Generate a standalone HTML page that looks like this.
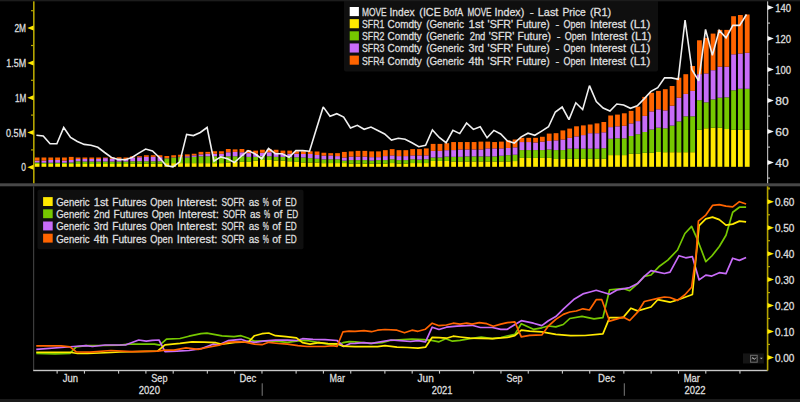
<!DOCTYPE html><html><head><meta charset="utf-8"><style>html,body{margin:0;padding:0;background:#000;width:800px;height:402px;overflow:hidden}</style></head><body><svg width="800" height="402" viewBox="0 0 800 402" style="display:block">
<rect width="800" height="402" fill="#000"/>
<rect x="0" y="0" width="800" height="1.2" fill="#1c1c1c"/>
<rect x="0" y="399" width="800" height="3" fill="#1a1a1a"/>
<rect x="0" y="183.3" width="800" height="3" fill="#484848"/>
<rect x="34.70" y="164.00" width="4.8" height="2.80" fill="#ffe900"/>
<rect x="34.70" y="162.50" width="4.8" height="1.50" fill="#76c800"/>
<rect x="34.70" y="160.60" width="4.8" height="1.90" fill="#c86cf8"/>
<rect x="34.70" y="157.50" width="4.8" height="3.10" fill="#ff6400"/>
<rect x="41.53" y="164.00" width="4.8" height="2.80" fill="#ffe900"/>
<rect x="41.53" y="162.75" width="4.8" height="1.25" fill="#76c800"/>
<rect x="41.53" y="160.60" width="4.8" height="2.15" fill="#c86cf8"/>
<rect x="41.53" y="157.50" width="4.8" height="3.10" fill="#ff6400"/>
<rect x="48.36" y="164.00" width="4.8" height="2.80" fill="#ffe900"/>
<rect x="48.36" y="162.75" width="4.8" height="1.25" fill="#76c800"/>
<rect x="48.36" y="160.00" width="4.8" height="2.75" fill="#c86cf8"/>
<rect x="48.36" y="157.50" width="4.8" height="2.50" fill="#ff6400"/>
<rect x="55.18" y="164.00" width="4.8" height="2.80" fill="#ffe900"/>
<rect x="55.18" y="162.75" width="4.8" height="1.25" fill="#76c800"/>
<rect x="55.18" y="160.00" width="4.8" height="2.75" fill="#c86cf8"/>
<rect x="55.18" y="157.50" width="4.8" height="2.50" fill="#ff6400"/>
<rect x="62.01" y="164.00" width="4.8" height="2.80" fill="#ffe900"/>
<rect x="62.01" y="162.75" width="4.8" height="1.25" fill="#76c800"/>
<rect x="62.01" y="160.60" width="4.8" height="2.15" fill="#c86cf8"/>
<rect x="62.01" y="157.50" width="4.8" height="3.10" fill="#ff6400"/>
<rect x="68.84" y="164.00" width="4.8" height="2.80" fill="#ffe900"/>
<rect x="68.84" y="162.50" width="4.8" height="1.50" fill="#76c800"/>
<rect x="68.84" y="160.00" width="4.8" height="2.50" fill="#c86cf8"/>
<rect x="68.84" y="156.90" width="4.8" height="3.10" fill="#ff6400"/>
<rect x="75.67" y="164.00" width="4.8" height="2.80" fill="#ffe900"/>
<rect x="75.67" y="161.25" width="4.8" height="2.75" fill="#76c800"/>
<rect x="75.67" y="159.00" width="4.8" height="2.25" fill="#c86cf8"/>
<rect x="75.67" y="157.50" width="4.8" height="1.50" fill="#ff6400"/>
<rect x="82.50" y="164.00" width="4.8" height="2.80" fill="#ffe900"/>
<rect x="82.50" y="161.50" width="4.8" height="2.50" fill="#76c800"/>
<rect x="82.50" y="159.00" width="4.8" height="2.50" fill="#c86cf8"/>
<rect x="82.50" y="157.50" width="4.8" height="1.50" fill="#ff6400"/>
<rect x="89.32" y="164.00" width="4.8" height="2.80" fill="#ffe900"/>
<rect x="89.32" y="161.50" width="4.8" height="2.50" fill="#76c800"/>
<rect x="89.32" y="159.00" width="4.8" height="2.50" fill="#c86cf8"/>
<rect x="89.32" y="157.50" width="4.8" height="1.50" fill="#ff6400"/>
<rect x="96.15" y="164.00" width="4.8" height="2.80" fill="#ffe900"/>
<rect x="96.15" y="161.50" width="4.8" height="2.50" fill="#76c800"/>
<rect x="96.15" y="159.00" width="4.8" height="2.50" fill="#c86cf8"/>
<rect x="96.15" y="157.50" width="4.8" height="1.50" fill="#ff6400"/>
<rect x="102.98" y="164.00" width="4.8" height="2.80" fill="#ffe900"/>
<rect x="102.98" y="161.50" width="4.8" height="2.50" fill="#76c800"/>
<rect x="102.98" y="158.10" width="4.8" height="3.40" fill="#c86cf8"/>
<rect x="102.98" y="157.50" width="4.8" height="0.60" fill="#ff6400"/>
<rect x="109.81" y="164.00" width="4.8" height="2.80" fill="#ffe900"/>
<rect x="109.81" y="161.50" width="4.8" height="2.50" fill="#76c800"/>
<rect x="109.81" y="158.75" width="4.8" height="2.75" fill="#c86cf8"/>
<rect x="109.81" y="157.25" width="4.8" height="1.50" fill="#ff6400"/>
<rect x="116.64" y="164.00" width="4.8" height="2.80" fill="#ffe900"/>
<rect x="116.64" y="161.50" width="4.8" height="2.50" fill="#76c800"/>
<rect x="116.64" y="158.75" width="4.8" height="2.75" fill="#c86cf8"/>
<rect x="116.64" y="157.25" width="4.8" height="1.50" fill="#ff6400"/>
<rect x="123.46" y="164.00" width="4.8" height="2.80" fill="#ffe900"/>
<rect x="123.46" y="161.50" width="4.8" height="2.50" fill="#76c800"/>
<rect x="123.46" y="159.00" width="4.8" height="2.50" fill="#c86cf8"/>
<rect x="123.46" y="157.50" width="4.8" height="1.50" fill="#ff6400"/>
<rect x="130.29" y="163.75" width="4.8" height="3.05" fill="#ffe900"/>
<rect x="130.29" y="161.25" width="4.8" height="2.50" fill="#76c800"/>
<rect x="130.29" y="157.50" width="4.8" height="3.75" fill="#c86cf8"/>
<rect x="130.29" y="156.25" width="4.8" height="1.25" fill="#ff6400"/>
<rect x="137.12" y="163.75" width="4.8" height="3.05" fill="#ffe900"/>
<rect x="137.12" y="161.25" width="4.8" height="2.50" fill="#76c800"/>
<rect x="137.12" y="157.25" width="4.8" height="4.00" fill="#c86cf8"/>
<rect x="137.12" y="156.25" width="4.8" height="1.00" fill="#ff6400"/>
<rect x="143.95" y="163.75" width="4.8" height="3.05" fill="#ffe900"/>
<rect x="143.95" y="161.25" width="4.8" height="2.50" fill="#76c800"/>
<rect x="143.95" y="156.88" width="4.8" height="4.38" fill="#c86cf8"/>
<rect x="143.95" y="155.25" width="4.8" height="1.62" fill="#ff6400"/>
<rect x="150.78" y="163.75" width="4.8" height="3.05" fill="#ffe900"/>
<rect x="150.78" y="161.25" width="4.8" height="2.50" fill="#76c800"/>
<rect x="150.78" y="156.88" width="4.8" height="4.38" fill="#c86cf8"/>
<rect x="150.78" y="155.25" width="4.8" height="1.62" fill="#ff6400"/>
<rect x="157.60" y="163.75" width="4.8" height="3.05" fill="#ffe900"/>
<rect x="157.60" y="161.25" width="4.8" height="2.50" fill="#76c800"/>
<rect x="157.60" y="157.12" width="4.8" height="4.12" fill="#c86cf8"/>
<rect x="157.60" y="155.25" width="4.8" height="1.88" fill="#ff6400"/>
<rect x="164.43" y="163.12" width="4.8" height="3.68" fill="#ffe900"/>
<rect x="164.43" y="158.38" width="4.8" height="4.75" fill="#76c800"/>
<rect x="164.43" y="158.12" width="4.8" height="0.25" fill="#c86cf8"/>
<rect x="164.43" y="156.00" width="4.8" height="2.12" fill="#ff6400"/>
<rect x="171.26" y="163.12" width="4.8" height="3.68" fill="#ffe900"/>
<rect x="171.26" y="157.50" width="4.8" height="5.62" fill="#76c800"/>
<rect x="171.26" y="157.25" width="4.8" height="0.25" fill="#c86cf8"/>
<rect x="171.26" y="155.25" width="4.8" height="2.00" fill="#ff6400"/>
<rect x="178.09" y="163.12" width="4.8" height="3.68" fill="#ffe900"/>
<rect x="178.09" y="157.12" width="4.8" height="6.00" fill="#76c800"/>
<rect x="178.09" y="156.88" width="4.8" height="0.25" fill="#c86cf8"/>
<rect x="178.09" y="154.75" width="4.8" height="2.12" fill="#ff6400"/>
<rect x="184.92" y="163.12" width="4.8" height="3.68" fill="#ffe900"/>
<rect x="184.92" y="157.50" width="4.8" height="5.62" fill="#76c800"/>
<rect x="184.92" y="156.25" width="4.8" height="1.25" fill="#c86cf8"/>
<rect x="184.92" y="154.38" width="4.8" height="1.88" fill="#ff6400"/>
<rect x="191.74" y="163.12" width="4.8" height="3.68" fill="#ffe900"/>
<rect x="191.74" y="156.88" width="4.8" height="6.25" fill="#76c800"/>
<rect x="191.74" y="155.38" width="4.8" height="1.50" fill="#c86cf8"/>
<rect x="191.74" y="153.75" width="4.8" height="1.62" fill="#ff6400"/>
<rect x="198.57" y="163.12" width="4.8" height="3.68" fill="#ffe900"/>
<rect x="198.57" y="156.25" width="4.8" height="6.88" fill="#76c800"/>
<rect x="198.57" y="154.38" width="4.8" height="1.88" fill="#c86cf8"/>
<rect x="198.57" y="151.88" width="4.8" height="2.50" fill="#ff6400"/>
<rect x="205.40" y="163.12" width="4.8" height="3.68" fill="#ffe900"/>
<rect x="205.40" y="156.25" width="4.8" height="6.88" fill="#76c800"/>
<rect x="205.40" y="153.75" width="4.8" height="2.50" fill="#c86cf8"/>
<rect x="205.40" y="151.88" width="4.8" height="1.88" fill="#ff6400"/>
<rect x="212.23" y="163.12" width="4.8" height="3.68" fill="#ffe900"/>
<rect x="212.23" y="156.25" width="4.8" height="6.88" fill="#76c800"/>
<rect x="212.23" y="153.75" width="4.8" height="2.50" fill="#c86cf8"/>
<rect x="212.23" y="151.25" width="4.8" height="2.50" fill="#ff6400"/>
<rect x="219.06" y="163.12" width="4.8" height="3.68" fill="#ffe900"/>
<rect x="219.06" y="156.25" width="4.8" height="6.88" fill="#76c800"/>
<rect x="219.06" y="153.75" width="4.8" height="2.50" fill="#c86cf8"/>
<rect x="219.06" y="151.25" width="4.8" height="2.50" fill="#ff6400"/>
<rect x="225.88" y="162.50" width="4.8" height="4.30" fill="#ffe900"/>
<rect x="225.88" y="156.25" width="4.8" height="6.25" fill="#76c800"/>
<rect x="225.88" y="152.25" width="4.8" height="4.00" fill="#c86cf8"/>
<rect x="225.88" y="149.00" width="4.8" height="3.25" fill="#ff6400"/>
<rect x="232.71" y="161.88" width="4.8" height="4.93" fill="#ffe900"/>
<rect x="232.71" y="156.25" width="4.8" height="5.62" fill="#76c800"/>
<rect x="232.71" y="151.88" width="4.8" height="4.38" fill="#c86cf8"/>
<rect x="232.71" y="149.38" width="4.8" height="2.50" fill="#ff6400"/>
<rect x="239.54" y="161.88" width="4.8" height="4.93" fill="#ffe900"/>
<rect x="239.54" y="156.25" width="4.8" height="5.62" fill="#76c800"/>
<rect x="239.54" y="152.25" width="4.8" height="4.00" fill="#c86cf8"/>
<rect x="239.54" y="149.00" width="4.8" height="3.25" fill="#ff6400"/>
<rect x="246.37" y="161.88" width="4.8" height="4.93" fill="#ffe900"/>
<rect x="246.37" y="156.88" width="4.8" height="5.00" fill="#76c800"/>
<rect x="246.37" y="153.12" width="4.8" height="3.75" fill="#c86cf8"/>
<rect x="246.37" y="150.00" width="4.8" height="3.12" fill="#ff6400"/>
<rect x="253.20" y="160.62" width="4.8" height="6.18" fill="#ffe900"/>
<rect x="253.20" y="156.88" width="4.8" height="3.75" fill="#76c800"/>
<rect x="253.20" y="153.75" width="4.8" height="3.12" fill="#c86cf8"/>
<rect x="253.20" y="150.62" width="4.8" height="3.12" fill="#ff6400"/>
<rect x="260.02" y="160.00" width="4.8" height="6.80" fill="#ffe900"/>
<rect x="260.02" y="156.25" width="4.8" height="3.75" fill="#76c800"/>
<rect x="260.02" y="152.75" width="4.8" height="3.50" fill="#c86cf8"/>
<rect x="260.02" y="149.75" width="4.8" height="3.00" fill="#ff6400"/>
<rect x="266.85" y="160.00" width="4.8" height="6.80" fill="#ffe900"/>
<rect x="266.85" y="156.25" width="4.8" height="3.75" fill="#76c800"/>
<rect x="266.85" y="152.25" width="4.8" height="4.00" fill="#c86cf8"/>
<rect x="266.85" y="149.00" width="4.8" height="3.25" fill="#ff6400"/>
<rect x="273.68" y="160.62" width="4.8" height="6.18" fill="#ffe900"/>
<rect x="273.68" y="156.88" width="4.8" height="3.75" fill="#76c800"/>
<rect x="273.68" y="152.75" width="4.8" height="4.12" fill="#c86cf8"/>
<rect x="273.68" y="149.75" width="4.8" height="3.00" fill="#ff6400"/>
<rect x="280.51" y="160.62" width="4.8" height="6.18" fill="#ffe900"/>
<rect x="280.51" y="156.88" width="4.8" height="3.75" fill="#76c800"/>
<rect x="280.51" y="153.50" width="4.8" height="3.38" fill="#c86cf8"/>
<rect x="280.51" y="150.62" width="4.8" height="2.88" fill="#ff6400"/>
<rect x="287.34" y="161.25" width="4.8" height="5.55" fill="#ffe900"/>
<rect x="287.34" y="157.25" width="4.8" height="4.00" fill="#76c800"/>
<rect x="287.34" y="153.75" width="4.8" height="3.50" fill="#c86cf8"/>
<rect x="287.34" y="150.62" width="4.8" height="3.12" fill="#ff6400"/>
<rect x="294.16" y="161.88" width="4.8" height="4.93" fill="#ffe900"/>
<rect x="294.16" y="157.25" width="4.8" height="4.62" fill="#76c800"/>
<rect x="294.16" y="153.75" width="4.8" height="3.50" fill="#c86cf8"/>
<rect x="294.16" y="151.25" width="4.8" height="2.50" fill="#ff6400"/>
<rect x="300.99" y="162.50" width="4.8" height="4.30" fill="#ffe900"/>
<rect x="300.99" y="157.50" width="4.8" height="5.00" fill="#76c800"/>
<rect x="300.99" y="154.00" width="4.8" height="3.50" fill="#c86cf8"/>
<rect x="300.99" y="151.25" width="4.8" height="2.75" fill="#ff6400"/>
<rect x="307.82" y="162.50" width="4.8" height="4.30" fill="#ffe900"/>
<rect x="307.82" y="158.12" width="4.8" height="4.38" fill="#76c800"/>
<rect x="307.82" y="154.00" width="4.8" height="4.12" fill="#c86cf8"/>
<rect x="307.82" y="151.25" width="4.8" height="2.75" fill="#ff6400"/>
<rect x="314.65" y="162.50" width="4.8" height="4.30" fill="#ffe900"/>
<rect x="314.65" y="158.75" width="4.8" height="3.75" fill="#76c800"/>
<rect x="314.65" y="155.00" width="4.8" height="3.75" fill="#c86cf8"/>
<rect x="314.65" y="151.50" width="4.8" height="3.50" fill="#ff6400"/>
<rect x="321.48" y="163.12" width="4.8" height="3.68" fill="#ffe900"/>
<rect x="321.48" y="159.38" width="4.8" height="3.75" fill="#76c800"/>
<rect x="321.48" y="155.62" width="4.8" height="3.75" fill="#c86cf8"/>
<rect x="321.48" y="152.75" width="4.8" height="2.88" fill="#ff6400"/>
<rect x="328.30" y="163.07" width="4.8" height="3.73" fill="#ffe900"/>
<rect x="328.30" y="159.23" width="4.8" height="3.83" fill="#76c800"/>
<rect x="328.30" y="155.40" width="4.8" height="3.83" fill="#c86cf8"/>
<rect x="328.30" y="153.14" width="4.8" height="2.26" fill="#ff6400"/>
<rect x="335.13" y="163.07" width="4.8" height="3.73" fill="#ffe900"/>
<rect x="335.13" y="159.23" width="4.8" height="3.83" fill="#76c800"/>
<rect x="335.13" y="156.10" width="4.8" height="3.14" fill="#c86cf8"/>
<rect x="335.13" y="153.14" width="4.8" height="2.96" fill="#ff6400"/>
<rect x="341.96" y="163.07" width="4.8" height="3.73" fill="#ffe900"/>
<rect x="341.96" y="160.63" width="4.8" height="2.44" fill="#76c800"/>
<rect x="341.96" y="157.49" width="4.8" height="3.14" fill="#c86cf8"/>
<rect x="341.96" y="151.92" width="4.8" height="5.57" fill="#ff6400"/>
<rect x="348.79" y="163.59" width="4.8" height="3.21" fill="#ffe900"/>
<rect x="348.79" y="160.10" width="4.8" height="3.48" fill="#76c800"/>
<rect x="348.79" y="156.62" width="4.8" height="3.48" fill="#c86cf8"/>
<rect x="348.79" y="151.39" width="4.8" height="5.23" fill="#ff6400"/>
<rect x="355.62" y="163.59" width="4.8" height="3.21" fill="#ffe900"/>
<rect x="355.62" y="160.10" width="4.8" height="3.48" fill="#76c800"/>
<rect x="355.62" y="156.62" width="4.8" height="3.48" fill="#c86cf8"/>
<rect x="355.62" y="150.87" width="4.8" height="5.75" fill="#ff6400"/>
<rect x="362.44" y="163.59" width="4.8" height="3.21" fill="#ffe900"/>
<rect x="362.44" y="160.10" width="4.8" height="3.48" fill="#76c800"/>
<rect x="362.44" y="156.62" width="4.8" height="3.48" fill="#c86cf8"/>
<rect x="362.44" y="150.87" width="4.8" height="5.75" fill="#ff6400"/>
<rect x="369.27" y="163.59" width="4.8" height="3.21" fill="#ffe900"/>
<rect x="369.27" y="160.63" width="4.8" height="2.96" fill="#76c800"/>
<rect x="369.27" y="157.14" width="4.8" height="3.48" fill="#c86cf8"/>
<rect x="369.27" y="151.39" width="4.8" height="5.75" fill="#ff6400"/>
<rect x="376.10" y="163.59" width="4.8" height="3.21" fill="#ffe900"/>
<rect x="376.10" y="160.10" width="4.8" height="3.48" fill="#76c800"/>
<rect x="376.10" y="157.14" width="4.8" height="2.96" fill="#c86cf8"/>
<rect x="376.10" y="151.39" width="4.8" height="5.75" fill="#ff6400"/>
<rect x="382.93" y="163.59" width="4.8" height="3.21" fill="#ffe900"/>
<rect x="382.93" y="160.10" width="4.8" height="3.48" fill="#76c800"/>
<rect x="382.93" y="156.10" width="4.8" height="4.01" fill="#c86cf8"/>
<rect x="382.93" y="150.17" width="4.8" height="5.92" fill="#ff6400"/>
<rect x="389.76" y="163.07" width="4.8" height="3.73" fill="#ffe900"/>
<rect x="389.76" y="159.23" width="4.8" height="3.83" fill="#76c800"/>
<rect x="389.76" y="155.40" width="4.8" height="3.83" fill="#c86cf8"/>
<rect x="389.76" y="149.13" width="4.8" height="6.27" fill="#ff6400"/>
<rect x="396.58" y="163.59" width="4.8" height="3.21" fill="#ffe900"/>
<rect x="396.58" y="160.10" width="4.8" height="3.48" fill="#76c800"/>
<rect x="396.58" y="156.10" width="4.8" height="4.01" fill="#c86cf8"/>
<rect x="396.58" y="150.17" width="4.8" height="5.92" fill="#ff6400"/>
<rect x="403.41" y="163.59" width="4.8" height="3.21" fill="#ffe900"/>
<rect x="403.41" y="160.10" width="4.8" height="3.48" fill="#76c800"/>
<rect x="403.41" y="156.10" width="4.8" height="4.01" fill="#c86cf8"/>
<rect x="403.41" y="150.17" width="4.8" height="5.92" fill="#ff6400"/>
<rect x="410.24" y="163.07" width="4.8" height="3.73" fill="#ffe900"/>
<rect x="410.24" y="159.23" width="4.8" height="3.83" fill="#76c800"/>
<rect x="410.24" y="155.40" width="4.8" height="3.83" fill="#c86cf8"/>
<rect x="410.24" y="149.13" width="4.8" height="6.27" fill="#ff6400"/>
<rect x="417.07" y="163.07" width="4.8" height="3.73" fill="#ffe900"/>
<rect x="417.07" y="159.58" width="4.8" height="3.48" fill="#76c800"/>
<rect x="417.07" y="155.40" width="4.8" height="4.18" fill="#c86cf8"/>
<rect x="417.07" y="149.13" width="4.8" height="6.27" fill="#ff6400"/>
<rect x="423.90" y="163.07" width="4.8" height="3.73" fill="#ffe900"/>
<rect x="423.90" y="159.23" width="4.8" height="3.83" fill="#76c800"/>
<rect x="423.90" y="155.40" width="4.8" height="3.83" fill="#c86cf8"/>
<rect x="423.90" y="148.43" width="4.8" height="6.97" fill="#ff6400"/>
<rect x="430.72" y="160.98" width="4.8" height="5.82" fill="#ffe900"/>
<rect x="430.72" y="157.49" width="4.8" height="3.48" fill="#76c800"/>
<rect x="430.72" y="150.87" width="4.8" height="6.62" fill="#c86cf8"/>
<rect x="430.72" y="143.90" width="4.8" height="6.97" fill="#ff6400"/>
<rect x="437.55" y="160.98" width="4.8" height="5.82" fill="#ffe900"/>
<rect x="437.55" y="157.49" width="4.8" height="3.48" fill="#76c800"/>
<rect x="437.55" y="150.87" width="4.8" height="6.62" fill="#c86cf8"/>
<rect x="437.55" y="143.90" width="4.8" height="6.97" fill="#ff6400"/>
<rect x="444.38" y="160.98" width="4.8" height="5.82" fill="#ffe900"/>
<rect x="444.38" y="156.62" width="4.8" height="4.36" fill="#76c800"/>
<rect x="444.38" y="150.17" width="4.8" height="6.45" fill="#c86cf8"/>
<rect x="444.38" y="143.21" width="4.8" height="6.97" fill="#ff6400"/>
<rect x="451.21" y="161.48" width="4.8" height="5.32" fill="#ffe900"/>
<rect x="451.21" y="156.84" width="4.8" height="4.65" fill="#76c800"/>
<rect x="451.21" y="150.08" width="4.8" height="6.76" fill="#c86cf8"/>
<rect x="451.21" y="142.05" width="4.8" height="8.03" fill="#ff6400"/>
<rect x="458.04" y="161.48" width="4.8" height="5.32" fill="#ffe900"/>
<rect x="458.04" y="156.84" width="4.8" height="4.65" fill="#76c800"/>
<rect x="458.04" y="149.44" width="4.8" height="7.39" fill="#c86cf8"/>
<rect x="458.04" y="142.05" width="4.8" height="7.39" fill="#ff6400"/>
<rect x="464.86" y="161.48" width="4.8" height="5.32" fill="#ffe900"/>
<rect x="464.86" y="156.41" width="4.8" height="5.07" fill="#76c800"/>
<rect x="464.86" y="149.44" width="4.8" height="6.97" fill="#c86cf8"/>
<rect x="464.86" y="142.05" width="4.8" height="7.39" fill="#ff6400"/>
<rect x="471.69" y="161.48" width="4.8" height="5.32" fill="#ffe900"/>
<rect x="471.69" y="156.41" width="4.8" height="5.07" fill="#76c800"/>
<rect x="471.69" y="149.44" width="4.8" height="6.97" fill="#c86cf8"/>
<rect x="471.69" y="142.05" width="4.8" height="7.39" fill="#ff6400"/>
<rect x="478.52" y="161.48" width="4.8" height="5.32" fill="#ffe900"/>
<rect x="478.52" y="156.41" width="4.8" height="5.07" fill="#76c800"/>
<rect x="478.52" y="149.44" width="4.8" height="6.97" fill="#c86cf8"/>
<rect x="478.52" y="141.62" width="4.8" height="7.82" fill="#ff6400"/>
<rect x="485.35" y="161.48" width="4.8" height="5.32" fill="#ffe900"/>
<rect x="485.35" y="156.41" width="4.8" height="5.07" fill="#76c800"/>
<rect x="485.35" y="148.38" width="4.8" height="8.03" fill="#c86cf8"/>
<rect x="485.35" y="141.62" width="4.8" height="6.76" fill="#ff6400"/>
<rect x="492.18" y="161.48" width="4.8" height="5.32" fill="#ffe900"/>
<rect x="492.18" y="156.41" width="4.8" height="5.07" fill="#76c800"/>
<rect x="492.18" y="148.38" width="4.8" height="8.03" fill="#c86cf8"/>
<rect x="492.18" y="142.05" width="4.8" height="6.34" fill="#ff6400"/>
<rect x="499.00" y="161.48" width="4.8" height="5.32" fill="#ffe900"/>
<rect x="499.00" y="155.78" width="4.8" height="5.70" fill="#76c800"/>
<rect x="499.00" y="148.38" width="4.8" height="7.39" fill="#c86cf8"/>
<rect x="499.00" y="141.62" width="4.8" height="6.76" fill="#ff6400"/>
<rect x="505.83" y="161.48" width="4.8" height="5.32" fill="#ffe900"/>
<rect x="505.83" y="155.15" width="4.8" height="6.34" fill="#76c800"/>
<rect x="505.83" y="147.96" width="4.8" height="7.18" fill="#c86cf8"/>
<rect x="505.83" y="140.36" width="4.8" height="7.61" fill="#ff6400"/>
<rect x="512.66" y="161.06" width="4.8" height="5.74" fill="#ffe900"/>
<rect x="512.66" y="154.72" width="4.8" height="6.34" fill="#76c800"/>
<rect x="512.66" y="147.33" width="4.8" height="7.39" fill="#c86cf8"/>
<rect x="512.66" y="139.51" width="4.8" height="7.82" fill="#ff6400"/>
<rect x="519.49" y="157.89" width="4.8" height="8.91" fill="#ffe900"/>
<rect x="519.49" y="150.08" width="4.8" height="7.82" fill="#76c800"/>
<rect x="519.49" y="142.05" width="4.8" height="8.03" fill="#c86cf8"/>
<rect x="519.49" y="137.82" width="4.8" height="4.23" fill="#ff6400"/>
<rect x="526.32" y="157.89" width="4.8" height="8.91" fill="#ffe900"/>
<rect x="526.32" y="150.08" width="4.8" height="7.82" fill="#76c800"/>
<rect x="526.32" y="142.05" width="4.8" height="8.03" fill="#c86cf8"/>
<rect x="526.32" y="137.82" width="4.8" height="4.23" fill="#ff6400"/>
<rect x="533.14" y="157.89" width="4.8" height="8.91" fill="#ffe900"/>
<rect x="533.14" y="150.08" width="4.8" height="7.82" fill="#76c800"/>
<rect x="533.14" y="142.47" width="4.8" height="7.61" fill="#c86cf8"/>
<rect x="533.14" y="137.82" width="4.8" height="4.65" fill="#ff6400"/>
<rect x="539.97" y="157.89" width="4.8" height="8.91" fill="#ffe900"/>
<rect x="539.97" y="150.08" width="4.8" height="7.82" fill="#76c800"/>
<rect x="539.97" y="141.62" width="4.8" height="8.45" fill="#c86cf8"/>
<rect x="539.97" y="136.76" width="4.8" height="4.86" fill="#ff6400"/>
<rect x="546.80" y="157.89" width="4.8" height="8.91" fill="#ffe900"/>
<rect x="546.80" y="149.44" width="4.8" height="8.45" fill="#76c800"/>
<rect x="546.80" y="140.99" width="4.8" height="8.45" fill="#c86cf8"/>
<rect x="546.80" y="133.59" width="4.8" height="7.39" fill="#ff6400"/>
<rect x="553.63" y="158.95" width="4.8" height="7.85" fill="#ffe900"/>
<rect x="553.63" y="150.08" width="4.8" height="8.87" fill="#76c800"/>
<rect x="553.63" y="140.36" width="4.8" height="9.72" fill="#c86cf8"/>
<rect x="553.63" y="133.17" width="4.8" height="7.18" fill="#ff6400"/>
<rect x="560.46" y="158.95" width="4.8" height="7.85" fill="#ffe900"/>
<rect x="560.46" y="150.08" width="4.8" height="8.87" fill="#76c800"/>
<rect x="560.46" y="139.51" width="4.8" height="10.56" fill="#c86cf8"/>
<rect x="560.46" y="130.43" width="4.8" height="9.09" fill="#ff6400"/>
<rect x="567.28" y="158.80" width="4.8" height="8.00" fill="#ffe900"/>
<rect x="567.28" y="148.70" width="4.8" height="10.10" fill="#76c800"/>
<rect x="567.28" y="137.90" width="4.8" height="10.80" fill="#c86cf8"/>
<rect x="567.28" y="128.60" width="4.8" height="9.30" fill="#ff6400"/>
<rect x="574.11" y="158.80" width="4.8" height="8.00" fill="#ffe900"/>
<rect x="574.11" y="148.70" width="4.8" height="10.10" fill="#76c800"/>
<rect x="574.11" y="136.40" width="4.8" height="12.30" fill="#c86cf8"/>
<rect x="574.11" y="126.30" width="4.8" height="10.10" fill="#ff6400"/>
<rect x="580.94" y="158.80" width="4.8" height="8.00" fill="#ffe900"/>
<rect x="580.94" y="148.70" width="4.8" height="10.10" fill="#76c800"/>
<rect x="580.94" y="135.10" width="4.8" height="13.60" fill="#c86cf8"/>
<rect x="580.94" y="125.40" width="4.8" height="9.70" fill="#ff6400"/>
<rect x="587.77" y="158.80" width="4.8" height="8.00" fill="#ffe900"/>
<rect x="587.77" y="148.70" width="4.8" height="10.10" fill="#76c800"/>
<rect x="587.77" y="133.20" width="4.8" height="15.50" fill="#c86cf8"/>
<rect x="587.77" y="124.50" width="4.8" height="8.70" fill="#ff6400"/>
<rect x="594.60" y="158.80" width="4.8" height="8.00" fill="#ffe900"/>
<rect x="594.60" y="148.70" width="4.8" height="10.10" fill="#76c800"/>
<rect x="594.60" y="133.20" width="4.8" height="15.50" fill="#c86cf8"/>
<rect x="594.60" y="123.40" width="4.8" height="9.80" fill="#ff6400"/>
<rect x="601.42" y="158.80" width="4.8" height="8.00" fill="#ffe900"/>
<rect x="601.42" y="148.20" width="4.8" height="10.60" fill="#76c800"/>
<rect x="601.42" y="132.30" width="4.8" height="15.90" fill="#c86cf8"/>
<rect x="601.42" y="122.00" width="4.8" height="10.30" fill="#ff6400"/>
<rect x="608.25" y="155.10" width="4.8" height="11.70" fill="#ffe900"/>
<rect x="608.25" y="138.80" width="4.8" height="16.30" fill="#76c800"/>
<rect x="608.25" y="127.10" width="4.8" height="11.70" fill="#c86cf8"/>
<rect x="608.25" y="115.50" width="4.8" height="11.60" fill="#ff6400"/>
<rect x="615.08" y="155.10" width="4.8" height="11.70" fill="#ffe900"/>
<rect x="615.08" y="138.30" width="4.8" height="16.80" fill="#76c800"/>
<rect x="615.08" y="126.30" width="4.8" height="12.00" fill="#c86cf8"/>
<rect x="615.08" y="114.60" width="4.8" height="11.70" fill="#ff6400"/>
<rect x="621.91" y="155.10" width="4.8" height="11.70" fill="#ffe900"/>
<rect x="621.91" y="138.30" width="4.8" height="16.80" fill="#76c800"/>
<rect x="621.91" y="125.80" width="4.8" height="12.50" fill="#c86cf8"/>
<rect x="621.91" y="113.30" width="4.8" height="12.50" fill="#ff6400"/>
<rect x="628.74" y="153.80" width="4.8" height="13.00" fill="#ffe900"/>
<rect x="628.74" y="136.00" width="4.8" height="17.80" fill="#76c800"/>
<rect x="628.74" y="123.40" width="4.8" height="12.60" fill="#c86cf8"/>
<rect x="628.74" y="110.90" width="4.8" height="12.50" fill="#ff6400"/>
<rect x="635.56" y="153.80" width="4.8" height="13.00" fill="#ffe900"/>
<rect x="635.56" y="134.20" width="4.8" height="19.60" fill="#76c800"/>
<rect x="635.56" y="121.10" width="4.8" height="13.10" fill="#c86cf8"/>
<rect x="635.56" y="106.60" width="4.8" height="14.50" fill="#ff6400"/>
<rect x="642.39" y="152.80" width="4.8" height="14.00" fill="#ffe900"/>
<rect x="642.39" y="132.00" width="4.8" height="20.80" fill="#76c800"/>
<rect x="642.39" y="115.90" width="4.8" height="16.10" fill="#c86cf8"/>
<rect x="642.39" y="96.90" width="4.8" height="19.00" fill="#ff6400"/>
<rect x="649.22" y="152.80" width="4.8" height="14.00" fill="#ffe900"/>
<rect x="649.22" y="129.50" width="4.8" height="23.30" fill="#76c800"/>
<rect x="649.22" y="111.40" width="4.8" height="18.10" fill="#c86cf8"/>
<rect x="649.22" y="92.75" width="4.8" height="18.65" fill="#ff6400"/>
<rect x="656.05" y="152.00" width="4.8" height="14.80" fill="#ffe900"/>
<rect x="656.05" y="127.70" width="4.8" height="24.30" fill="#76c800"/>
<rect x="656.05" y="109.30" width="4.8" height="18.40" fill="#c86cf8"/>
<rect x="656.05" y="90.90" width="4.8" height="18.40" fill="#ff6400"/>
<rect x="662.88" y="152.20" width="4.8" height="14.60" fill="#ffe900"/>
<rect x="662.88" y="128.30" width="4.8" height="23.90" fill="#76c800"/>
<rect x="662.88" y="110.40" width="4.8" height="17.90" fill="#c86cf8"/>
<rect x="662.88" y="89.20" width="4.8" height="21.20" fill="#ff6400"/>
<rect x="669.70" y="152.20" width="4.8" height="14.60" fill="#ffe900"/>
<rect x="669.70" y="125.60" width="4.8" height="26.60" fill="#76c800"/>
<rect x="669.70" y="105.70" width="4.8" height="19.90" fill="#c86cf8"/>
<rect x="669.70" y="86.00" width="4.8" height="19.70" fill="#ff6400"/>
<rect x="676.53" y="152.20" width="4.8" height="14.60" fill="#ffe900"/>
<rect x="676.53" y="121.40" width="4.8" height="30.80" fill="#76c800"/>
<rect x="676.53" y="97.70" width="4.8" height="23.70" fill="#c86cf8"/>
<rect x="676.53" y="77.70" width="4.8" height="20.00" fill="#ff6400"/>
<rect x="683.36" y="152.20" width="4.8" height="14.60" fill="#ffe900"/>
<rect x="683.36" y="116.30" width="4.8" height="35.90" fill="#76c800"/>
<rect x="683.36" y="93.90" width="4.8" height="22.40" fill="#c86cf8"/>
<rect x="683.36" y="74.20" width="4.8" height="19.70" fill="#ff6400"/>
<rect x="690.19" y="152.20" width="4.8" height="14.60" fill="#ffe900"/>
<rect x="690.19" y="116.30" width="4.8" height="35.90" fill="#76c800"/>
<rect x="690.19" y="90.90" width="4.8" height="25.40" fill="#c86cf8"/>
<rect x="690.19" y="66.00" width="4.8" height="24.90" fill="#ff6400"/>
<rect x="697.02" y="129.80" width="4.8" height="37.00" fill="#ffe900"/>
<rect x="697.02" y="100.20" width="4.8" height="29.60" fill="#76c800"/>
<rect x="697.02" y="74.20" width="4.8" height="26.00" fill="#c86cf8"/>
<rect x="697.02" y="40.30" width="4.8" height="33.90" fill="#ff6400"/>
<rect x="703.84" y="128.30" width="4.8" height="38.50" fill="#ffe900"/>
<rect x="703.84" y="102.30" width="4.8" height="26.00" fill="#76c800"/>
<rect x="703.84" y="73.40" width="4.8" height="28.90" fill="#c86cf8"/>
<rect x="703.84" y="37.90" width="4.8" height="35.50" fill="#ff6400"/>
<rect x="710.67" y="127.70" width="4.8" height="39.10" fill="#ffe900"/>
<rect x="710.67" y="99.40" width="4.8" height="28.30" fill="#76c800"/>
<rect x="710.67" y="70.20" width="4.8" height="29.20" fill="#c86cf8"/>
<rect x="710.67" y="33.60" width="4.8" height="36.60" fill="#ff6400"/>
<rect x="717.50" y="127.70" width="4.8" height="39.10" fill="#ffe900"/>
<rect x="717.50" y="97.70" width="4.8" height="30.00" fill="#76c800"/>
<rect x="717.50" y="66.70" width="4.8" height="31.00" fill="#c86cf8"/>
<rect x="717.50" y="29.90" width="4.8" height="36.80" fill="#ff6400"/>
<rect x="724.33" y="129.00" width="4.8" height="37.80" fill="#ffe900"/>
<rect x="724.33" y="97.30" width="4.8" height="31.70" fill="#76c800"/>
<rect x="724.33" y="66.70" width="4.8" height="30.60" fill="#c86cf8"/>
<rect x="724.33" y="29.90" width="4.8" height="36.80" fill="#ff6400"/>
<rect x="731.16" y="129.80" width="4.8" height="37.00" fill="#ffe900"/>
<rect x="731.16" y="90.30" width="4.8" height="39.50" fill="#76c800"/>
<rect x="731.16" y="54.30" width="4.8" height="36.00" fill="#c86cf8"/>
<rect x="731.16" y="16.20" width="4.8" height="38.10" fill="#ff6400"/>
<rect x="737.98" y="129.80" width="4.8" height="37.00" fill="#ffe900"/>
<rect x="737.98" y="88.80" width="4.8" height="41.00" fill="#76c800"/>
<rect x="737.98" y="53.50" width="4.8" height="35.30" fill="#c86cf8"/>
<rect x="737.98" y="15.00" width="4.8" height="38.50" fill="#ff6400"/>
<rect x="744.81" y="129.80" width="4.8" height="37.00" fill="#ffe900"/>
<rect x="744.81" y="88.80" width="4.8" height="41.00" fill="#76c800"/>
<rect x="744.81" y="52.80" width="4.8" height="36.00" fill="#c86cf8"/>
<rect x="744.81" y="14.50" width="4.8" height="38.30" fill="#ff6400"/>
<polyline points="36.40,135.25 43.23,136.00 50.06,143.75 56.88,143.75 63.71,127.50 70.54,137.50 77.37,141.50 84.20,144.40 91.02,145.25 97.85,147.25 104.68,152.50 111.51,157.50 118.34,159.40 125.16,159.75 131.99,157.50 138.82,153.10 145.65,149.00 152.48,151.00 159.30,157.50 166.13,165.60 172.96,166.90 179.79,161.90 186.62,134.40 193.44,135.60 200.27,132.50 207.10,127.50 213.93,161.25 220.76,156.90 227.58,158.75 234.41,162.50 241.24,156.25 248.07,150.60 254.90,153.75 261.72,158.75 268.55,148.50 275.38,153.75 282.21,153.75 289.04,157.25 295.86,150.60 302.69,150.60 309.52,151.25 316.35,129.00 323.18,106.90 330.00,116.30 336.83,113.70 343.66,117.10 350.49,128.00 357.32,125.30 364.14,129.30 370.97,127.00 377.80,130.50 384.63,134.00 391.46,140.00 398.28,138.30 405.11,139.20 411.94,142.70 418.77,146.70 425.60,145.30 432.42,130.00 439.25,137.50 446.08,142.70 452.91,130.40 459.74,133.60 466.56,123.00 473.39,129.40 480.22,126.80 487.05,137.80 493.88,130.40 500.70,134.00 507.53,141.00 514.36,143.10 521.19,136.80 528.02,133.20 534.84,135.30 541.67,131.10 548.50,126.80 555.33,112.00 562.16,107.00 568.98,119.60 575.81,102.80 582.64,109.60 589.47,85.60 596.30,101.50 603.12,108.00 609.95,111.00 616.78,104.00 623.61,105.00 630.44,108.30 637.26,105.70 644.09,98.90 650.92,91.40 657.75,87.60 664.58,77.90 671.40,77.90 678.23,79.40 685.06,20.00 691.89,69.70 698.72,80.90 705.54,29.40 712.37,55.30 719.20,30.40 726.03,37.90 732.86,25.40 739.68,25.40 746.51,14.50" fill="none" stroke="#f0f0f0" stroke-width="1.6" stroke-linejoin="miter" stroke-miterlimit="2.2"/>
<rect x="33" y="1.2" width="1.6" height="182.1" fill="#b4a400"/>
<polygon points="27.3,167.30 33.5,164.80 33.5,169.80" fill="#ffe900"/>
<text x="21.20" y="171.40" font-family="Liberation Sans, sans-serif" font-size="10.5" fill="#dedede" stroke="#dedede" stroke-width="0.3" textLength="4.70" lengthAdjust="spacingAndGlyphs">0</text>
<polygon points="27.3,132.50 33.5,130.00 33.5,135.00" fill="#ffe900"/>
<text x="6.00" y="136.60" font-family="Liberation Sans, sans-serif" font-size="10.5" fill="#dedede" stroke="#dedede" stroke-width="0.3" textLength="20.20" lengthAdjust="spacingAndGlyphs">0.5M</text>
<polygon points="27.3,97.70 33.5,95.20 33.5,100.20" fill="#ffe900"/>
<text x="14.90" y="101.80" font-family="Liberation Sans, sans-serif" font-size="10.5" fill="#dedede" stroke="#dedede" stroke-width="0.3" textLength="11.30" lengthAdjust="spacingAndGlyphs">1M</text>
<polygon points="27.3,62.90 33.5,60.40 33.5,65.40" fill="#ffe900"/>
<text x="6.25" y="67.00" font-family="Liberation Sans, sans-serif" font-size="10.5" fill="#dedede" stroke="#dedede" stroke-width="0.3" textLength="19.85" lengthAdjust="spacingAndGlyphs">1.5M</text>
<polygon points="27.3,28.10 33.5,25.60 33.5,30.60" fill="#ffe900"/>
<text x="14.40" y="32.20" font-family="Liberation Sans, sans-serif" font-size="10.5" fill="#dedede" stroke="#dedede" stroke-width="0.3" textLength="11.60" lengthAdjust="spacingAndGlyphs">2M</text>
<rect x="31" y="149.30" width="2" height="1.2" fill="#b4a400"/>
<rect x="31" y="114.50" width="2" height="1.2" fill="#b4a400"/>
<rect x="31" y="79.70" width="2" height="1.2" fill="#b4a400"/>
<rect x="31" y="44.90" width="2" height="1.2" fill="#b4a400"/>
<rect x="31" y="10.10" width="2" height="1.2" fill="#b4a400"/>
<rect x="767" y="1.2" width="1.2" height="182.1" fill="#b4b4b4"/>
<polygon points="773.8,162.60 767.5,160.10 767.5,165.10" fill="#f4f4f4"/>
<text x="775.20" y="166.70" font-family="Liberation Sans, sans-serif" font-size="10.5" fill="#dedede" stroke="#dedede" stroke-width="0.3" textLength="13.40" lengthAdjust="spacingAndGlyphs">40</text>
<polygon points="773.8,131.60 767.5,129.10 767.5,134.10" fill="#f4f4f4"/>
<text x="775.20" y="135.70" font-family="Liberation Sans, sans-serif" font-size="10.5" fill="#dedede" stroke="#dedede" stroke-width="0.3" textLength="13.40" lengthAdjust="spacingAndGlyphs">60</text>
<polygon points="773.8,100.60 767.5,98.10 767.5,103.10" fill="#f4f4f4"/>
<text x="775.20" y="104.70" font-family="Liberation Sans, sans-serif" font-size="10.5" fill="#dedede" stroke="#dedede" stroke-width="0.3" textLength="13.40" lengthAdjust="spacingAndGlyphs">80</text>
<polygon points="773.8,69.60 767.5,67.10 767.5,72.10" fill="#f4f4f4"/>
<text x="775.20" y="73.70" font-family="Liberation Sans, sans-serif" font-size="10.5" fill="#dedede" stroke="#dedede" stroke-width="0.3" textLength="15.80" lengthAdjust="spacingAndGlyphs">100</text>
<polygon points="773.8,38.60 767.5,36.10 767.5,41.10" fill="#f4f4f4"/>
<text x="775.20" y="42.70" font-family="Liberation Sans, sans-serif" font-size="10.5" fill="#dedede" stroke="#dedede" stroke-width="0.3" textLength="15.80" lengthAdjust="spacingAndGlyphs">120</text>
<polygon points="773.8,7.60 767.5,5.10 767.5,10.10" fill="#f4f4f4"/>
<text x="775.20" y="11.70" font-family="Liberation Sans, sans-serif" font-size="10.5" fill="#dedede" stroke="#dedede" stroke-width="0.3" textLength="15.80" lengthAdjust="spacingAndGlyphs">140</text>
<rect x="768" y="177.50" width="2" height="1.2" fill="#b4b4b4"/>
<rect x="768" y="146.50" width="2" height="1.2" fill="#b4b4b4"/>
<rect x="768" y="115.50" width="2" height="1.2" fill="#b4b4b4"/>
<rect x="768" y="84.50" width="2" height="1.2" fill="#b4b4b4"/>
<rect x="768" y="53.50" width="2" height="1.2" fill="#b4b4b4"/>
<rect x="768" y="22.50" width="2" height="1.2" fill="#b4b4b4"/>
<rect x="344" y="-2" width="314" height="73.5" rx="2" fill="#0f0f0f"/><rect x="0" y="0" width="800" height="1.2" fill="#1c1c1c"/>
<rect x="349.7" y="7.00" width="9.2" height="9.1" fill="#ffffff"/>
<text x="362.00" y="16.00" font-family="Liberation Sans, sans-serif" font-size="10.5" fill="#dedede" stroke="#dedede" stroke-width="0.3" textLength="24.70" lengthAdjust="spacingAndGlyphs">MOVE</text>
<text x="389.50" y="16.00" font-family="Liberation Sans, sans-serif" font-size="10.5" fill="#dedede" stroke="#dedede" stroke-width="0.3" textLength="25.00" lengthAdjust="spacingAndGlyphs">Index</text>
<text x="419.30" y="16.00" font-family="Liberation Sans, sans-serif" font-size="10.5" fill="#dedede" stroke="#dedede" stroke-width="0.3" textLength="21.50" lengthAdjust="spacingAndGlyphs">(ICE</text>
<text x="443.20" y="16.00" font-family="Liberation Sans, sans-serif" font-size="10.5" fill="#dedede" stroke="#dedede" stroke-width="0.3" textLength="20.10" lengthAdjust="spacingAndGlyphs">BofA</text>
<text x="467.40" y="16.00" font-family="Liberation Sans, sans-serif" font-size="10.5" fill="#dedede" stroke="#dedede" stroke-width="0.3" textLength="24.20" lengthAdjust="spacingAndGlyphs">MOVE</text>
<text x="494.50" y="16.00" font-family="Liberation Sans, sans-serif" font-size="10.5" fill="#dedede" stroke="#dedede" stroke-width="0.3" textLength="29.80" lengthAdjust="spacingAndGlyphs">Index)</text>
<text x="529.80" y="16.00" font-family="Liberation Sans, sans-serif" font-size="10.5" fill="#dedede" stroke="#dedede" stroke-width="0.3" textLength="4.00" lengthAdjust="spacingAndGlyphs">-</text>
<text x="537.80" y="16.00" font-family="Liberation Sans, sans-serif" font-size="10.5" fill="#dedede" stroke="#dedede" stroke-width="0.3" textLength="20.60" lengthAdjust="spacingAndGlyphs">Last</text>
<text x="562.40" y="16.00" font-family="Liberation Sans, sans-serif" font-size="10.5" fill="#dedede" stroke="#dedede" stroke-width="0.3" textLength="23.40" lengthAdjust="spacingAndGlyphs">Price</text>
<text x="589.90" y="16.00" font-family="Liberation Sans, sans-serif" font-size="10.5" fill="#dedede" stroke="#dedede" stroke-width="0.3" textLength="21.30" lengthAdjust="spacingAndGlyphs">(R1)</text>
<rect x="349.7" y="19.15" width="9.2" height="9.1" fill="#ffe900"/>
<text x="362.00" y="28.15" font-family="Liberation Sans, sans-serif" font-size="10.5" fill="#dedede" stroke="#dedede" stroke-width="0.3" textLength="22.30" lengthAdjust="spacingAndGlyphs">SFR1</text>
<text x="387.50" y="28.15" font-family="Liberation Sans, sans-serif" font-size="10.5" fill="#dedede" stroke="#dedede" stroke-width="0.3" textLength="34.20" lengthAdjust="spacingAndGlyphs">Comdty</text>
<text x="426.20" y="28.15" font-family="Liberation Sans, sans-serif" font-size="10.5" fill="#dedede" stroke="#dedede" stroke-width="0.3" textLength="37.60" lengthAdjust="spacingAndGlyphs">(Generic</text>
<text x="468.50" y="28.15" font-family="Liberation Sans, sans-serif" font-size="10.5" fill="#dedede" stroke="#dedede" stroke-width="0.3" textLength="15.40" lengthAdjust="spacingAndGlyphs">1st</text>
<text x="487.60" y="28.15" font-family="Liberation Sans, sans-serif" font-size="10.5" fill="#dedede" stroke="#dedede" stroke-width="0.3" textLength="25.50" lengthAdjust="spacingAndGlyphs">&#39;SFR&#39;</text>
<text x="516.30" y="28.15" font-family="Liberation Sans, sans-serif" font-size="10.5" fill="#dedede" stroke="#dedede" stroke-width="0.3" textLength="33.40" lengthAdjust="spacingAndGlyphs">Future)</text>
<text x="555.50" y="28.15" font-family="Liberation Sans, sans-serif" font-size="10.5" fill="#dedede" stroke="#dedede" stroke-width="0.3" textLength="3.70" lengthAdjust="spacingAndGlyphs">-</text>
<text x="563.50" y="28.15" font-family="Liberation Sans, sans-serif" font-size="10.5" fill="#dedede" stroke="#dedede" stroke-width="0.3" textLength="21.90" lengthAdjust="spacingAndGlyphs">Open</text>
<text x="589.90" y="28.15" font-family="Liberation Sans, sans-serif" font-size="10.5" fill="#dedede" stroke="#dedede" stroke-width="0.3" textLength="36.10" lengthAdjust="spacingAndGlyphs">Interest</text>
<text x="630.00" y="28.15" font-family="Liberation Sans, sans-serif" font-size="10.5" fill="#dedede" stroke="#dedede" stroke-width="0.3" textLength="20.20" lengthAdjust="spacingAndGlyphs">(L1)</text>
<rect x="349.7" y="31.30" width="9.2" height="9.1" fill="#76c800"/>
<text x="362.00" y="40.30" font-family="Liberation Sans, sans-serif" font-size="10.5" fill="#dedede" stroke="#dedede" stroke-width="0.3" textLength="22.30" lengthAdjust="spacingAndGlyphs">SFR2</text>
<text x="387.50" y="40.30" font-family="Liberation Sans, sans-serif" font-size="10.5" fill="#dedede" stroke="#dedede" stroke-width="0.3" textLength="34.20" lengthAdjust="spacingAndGlyphs">Comdty</text>
<text x="426.20" y="40.30" font-family="Liberation Sans, sans-serif" font-size="10.5" fill="#dedede" stroke="#dedede" stroke-width="0.3" textLength="37.60" lengthAdjust="spacingAndGlyphs">(Generic</text>
<text x="469.70" y="40.30" font-family="Liberation Sans, sans-serif" font-size="10.5" fill="#dedede" stroke="#dedede" stroke-width="0.3" textLength="15.64" lengthAdjust="spacingAndGlyphs">2nd</text>
<text x="488.80" y="40.30" font-family="Liberation Sans, sans-serif" font-size="10.5" fill="#dedede" stroke="#dedede" stroke-width="0.3" textLength="25.50" lengthAdjust="spacingAndGlyphs">&#39;SFR&#39;</text>
<text x="517.50" y="40.30" font-family="Liberation Sans, sans-serif" font-size="10.5" fill="#dedede" stroke="#dedede" stroke-width="0.3" textLength="33.40" lengthAdjust="spacingAndGlyphs">Future)</text>
<text x="556.70" y="40.30" font-family="Liberation Sans, sans-serif" font-size="10.5" fill="#dedede" stroke="#dedede" stroke-width="0.3" textLength="3.70" lengthAdjust="spacingAndGlyphs">-</text>
<text x="564.70" y="40.30" font-family="Liberation Sans, sans-serif" font-size="10.5" fill="#dedede" stroke="#dedede" stroke-width="0.3" textLength="21.90" lengthAdjust="spacingAndGlyphs">Open</text>
<text x="591.10" y="40.30" font-family="Liberation Sans, sans-serif" font-size="10.5" fill="#dedede" stroke="#dedede" stroke-width="0.3" textLength="36.10" lengthAdjust="spacingAndGlyphs">Interest</text>
<text x="631.20" y="40.30" font-family="Liberation Sans, sans-serif" font-size="10.5" fill="#dedede" stroke="#dedede" stroke-width="0.3" textLength="20.20" lengthAdjust="spacingAndGlyphs">(L1)</text>
<rect x="349.7" y="43.45" width="9.2" height="9.1" fill="#c86cf8"/>
<text x="362.00" y="52.45" font-family="Liberation Sans, sans-serif" font-size="10.5" fill="#dedede" stroke="#dedede" stroke-width="0.3" textLength="22.30" lengthAdjust="spacingAndGlyphs">SFR3</text>
<text x="387.50" y="52.45" font-family="Liberation Sans, sans-serif" font-size="10.5" fill="#dedede" stroke="#dedede" stroke-width="0.3" textLength="34.20" lengthAdjust="spacingAndGlyphs">Comdty</text>
<text x="426.20" y="52.45" font-family="Liberation Sans, sans-serif" font-size="10.5" fill="#dedede" stroke="#dedede" stroke-width="0.3" textLength="37.60" lengthAdjust="spacingAndGlyphs">(Generic</text>
<text x="468.50" y="52.45" font-family="Liberation Sans, sans-serif" font-size="10.5" fill="#dedede" stroke="#dedede" stroke-width="0.3" textLength="15.40" lengthAdjust="spacingAndGlyphs">3rd</text>
<text x="487.60" y="52.45" font-family="Liberation Sans, sans-serif" font-size="10.5" fill="#dedede" stroke="#dedede" stroke-width="0.3" textLength="25.50" lengthAdjust="spacingAndGlyphs">&#39;SFR&#39;</text>
<text x="516.30" y="52.45" font-family="Liberation Sans, sans-serif" font-size="10.5" fill="#dedede" stroke="#dedede" stroke-width="0.3" textLength="33.40" lengthAdjust="spacingAndGlyphs">Future)</text>
<text x="555.50" y="52.45" font-family="Liberation Sans, sans-serif" font-size="10.5" fill="#dedede" stroke="#dedede" stroke-width="0.3" textLength="3.70" lengthAdjust="spacingAndGlyphs">-</text>
<text x="563.50" y="52.45" font-family="Liberation Sans, sans-serif" font-size="10.5" fill="#dedede" stroke="#dedede" stroke-width="0.3" textLength="21.90" lengthAdjust="spacingAndGlyphs">Open</text>
<text x="589.90" y="52.45" font-family="Liberation Sans, sans-serif" font-size="10.5" fill="#dedede" stroke="#dedede" stroke-width="0.3" textLength="36.10" lengthAdjust="spacingAndGlyphs">Interest</text>
<text x="630.00" y="52.45" font-family="Liberation Sans, sans-serif" font-size="10.5" fill="#dedede" stroke="#dedede" stroke-width="0.3" textLength="20.20" lengthAdjust="spacingAndGlyphs">(L1)</text>
<rect x="349.7" y="55.60" width="9.2" height="9.1" fill="#ff6400"/>
<text x="362.00" y="64.60" font-family="Liberation Sans, sans-serif" font-size="10.5" fill="#dedede" stroke="#dedede" stroke-width="0.3" textLength="22.30" lengthAdjust="spacingAndGlyphs">SFR4</text>
<text x="387.50" y="64.60" font-family="Liberation Sans, sans-serif" font-size="10.5" fill="#dedede" stroke="#dedede" stroke-width="0.3" textLength="34.20" lengthAdjust="spacingAndGlyphs">Comdty</text>
<text x="426.20" y="64.60" font-family="Liberation Sans, sans-serif" font-size="10.5" fill="#dedede" stroke="#dedede" stroke-width="0.3" textLength="37.60" lengthAdjust="spacingAndGlyphs">(Generic</text>
<text x="468.50" y="64.60" font-family="Liberation Sans, sans-serif" font-size="10.5" fill="#dedede" stroke="#dedede" stroke-width="0.3" textLength="15.40" lengthAdjust="spacingAndGlyphs">4th</text>
<text x="487.60" y="64.60" font-family="Liberation Sans, sans-serif" font-size="10.5" fill="#dedede" stroke="#dedede" stroke-width="0.3" textLength="25.50" lengthAdjust="spacingAndGlyphs">&#39;SFR&#39;</text>
<text x="516.30" y="64.60" font-family="Liberation Sans, sans-serif" font-size="10.5" fill="#dedede" stroke="#dedede" stroke-width="0.3" textLength="33.40" lengthAdjust="spacingAndGlyphs">Future)</text>
<text x="555.50" y="64.60" font-family="Liberation Sans, sans-serif" font-size="10.5" fill="#dedede" stroke="#dedede" stroke-width="0.3" textLength="3.70" lengthAdjust="spacingAndGlyphs">-</text>
<text x="563.50" y="64.60" font-family="Liberation Sans, sans-serif" font-size="10.5" fill="#dedede" stroke="#dedede" stroke-width="0.3" textLength="21.90" lengthAdjust="spacingAndGlyphs">Open</text>
<text x="589.90" y="64.60" font-family="Liberation Sans, sans-serif" font-size="10.5" fill="#dedede" stroke="#dedede" stroke-width="0.3" textLength="36.10" lengthAdjust="spacingAndGlyphs">Interest</text>
<text x="630.00" y="64.60" font-family="Liberation Sans, sans-serif" font-size="10.5" fill="#dedede" stroke="#dedede" stroke-width="0.3" textLength="20.20" lengthAdjust="spacingAndGlyphs">(L1)</text>
<rect x="33" y="186.3" width="1.2" height="184" fill="#3c3c3c"/>
<rect x="33.2" y="369.8" width="734.5" height="1.4" fill="#c8c8c8"/>
<rect x="766.8" y="186.3" width="1.6" height="184.3" fill="#b4a400"/>
<polygon points="774,357.40 767.5,354.90 767.5,359.90" fill="#ffe900"/>
<text x="774.90" y="361.60" font-family="Liberation Sans, sans-serif" font-size="10.5" fill="#dedede" stroke="#dedede" stroke-width="0.3" textLength="19.50" lengthAdjust="spacingAndGlyphs">0.00</text>
<polygon points="774,331.47 767.5,328.97 767.5,333.97" fill="#ffe900"/>
<text x="774.90" y="335.67" font-family="Liberation Sans, sans-serif" font-size="10.5" fill="#dedede" stroke="#dedede" stroke-width="0.3" textLength="19.50" lengthAdjust="spacingAndGlyphs">0.10</text>
<polygon points="774,305.54 767.5,303.04 767.5,308.04" fill="#ffe900"/>
<text x="774.90" y="309.74" font-family="Liberation Sans, sans-serif" font-size="10.5" fill="#dedede" stroke="#dedede" stroke-width="0.3" textLength="19.50" lengthAdjust="spacingAndGlyphs">0.20</text>
<polygon points="774,279.61 767.5,277.11 767.5,282.11" fill="#ffe900"/>
<text x="774.90" y="283.81" font-family="Liberation Sans, sans-serif" font-size="10.5" fill="#dedede" stroke="#dedede" stroke-width="0.3" textLength="19.50" lengthAdjust="spacingAndGlyphs">0.30</text>
<polygon points="774,253.68 767.5,251.18 767.5,256.18" fill="#ffe900"/>
<text x="774.90" y="257.88" font-family="Liberation Sans, sans-serif" font-size="10.5" fill="#dedede" stroke="#dedede" stroke-width="0.3" textLength="19.50" lengthAdjust="spacingAndGlyphs">0.40</text>
<polygon points="774,227.75 767.5,225.25 767.5,230.25" fill="#ffe900"/>
<text x="774.90" y="231.95" font-family="Liberation Sans, sans-serif" font-size="10.5" fill="#dedede" stroke="#dedede" stroke-width="0.3" textLength="19.50" lengthAdjust="spacingAndGlyphs">0.50</text>
<polygon points="774,201.82 767.5,199.32 767.5,204.32" fill="#ffe900"/>
<text x="774.90" y="206.02" font-family="Liberation Sans, sans-serif" font-size="10.5" fill="#dedede" stroke="#dedede" stroke-width="0.3" textLength="19.50" lengthAdjust="spacingAndGlyphs">0.60</text>
<rect x="768" y="343.83" width="2" height="1.2" fill="#b4a400"/>
<rect x="768" y="317.90" width="2" height="1.2" fill="#b4a400"/>
<rect x="768" y="291.97" width="2" height="1.2" fill="#b4a400"/>
<rect x="768" y="266.04" width="2" height="1.2" fill="#b4a400"/>
<rect x="768" y="240.11" width="2" height="1.2" fill="#b4a400"/>
<rect x="768" y="214.18" width="2" height="1.2" fill="#b4a400"/>
<rect x="768" y="188.25" width="2" height="1.2" fill="#b4a400"/>
<rect x="767.5" y="187.5" width="2.5" height="1.2" fill="#b4a400"/>
<rect x="56.58" y="371" width="1.1" height="2.6" fill="#c8c8c8"/>
<rect x="83.90" y="371" width="1.1" height="2.6" fill="#c8c8c8"/>
<rect x="118.04" y="371" width="1.1" height="2.6" fill="#c8c8c8"/>
<rect x="145.35" y="371" width="1.1" height="2.6" fill="#c8c8c8"/>
<rect x="172.66" y="371" width="1.1" height="2.6" fill="#c8c8c8"/>
<rect x="206.80" y="371" width="1.1" height="2.6" fill="#c8c8c8"/>
<rect x="234.11" y="371" width="1.1" height="2.6" fill="#c8c8c8"/>
<rect x="261.42" y="371" width="1.1" height="2.6" fill="#c8c8c8"/>
<rect x="295.56" y="371" width="1.1" height="2.6" fill="#c8c8c8"/>
<rect x="322.88" y="371" width="1.1" height="2.6" fill="#c8c8c8"/>
<rect x="350.19" y="371" width="1.1" height="2.6" fill="#c8c8c8"/>
<rect x="384.33" y="371" width="1.1" height="2.6" fill="#c8c8c8"/>
<rect x="411.64" y="371" width="1.1" height="2.6" fill="#c8c8c8"/>
<rect x="438.95" y="371" width="1.1" height="2.6" fill="#c8c8c8"/>
<rect x="473.09" y="371" width="1.1" height="2.6" fill="#c8c8c8"/>
<rect x="500.40" y="371" width="1.1" height="2.6" fill="#c8c8c8"/>
<rect x="527.72" y="371" width="1.1" height="2.6" fill="#c8c8c8"/>
<rect x="561.86" y="371" width="1.1" height="2.6" fill="#c8c8c8"/>
<rect x="589.17" y="371" width="1.1" height="2.6" fill="#c8c8c8"/>
<rect x="623.31" y="371" width="1.1" height="2.6" fill="#c8c8c8"/>
<rect x="650.62" y="371" width="1.1" height="2.6" fill="#c8c8c8"/>
<rect x="677.93" y="371" width="1.1" height="2.6" fill="#c8c8c8"/>
<rect x="705.24" y="371" width="1.1" height="2.6" fill="#c8c8c8"/>
<rect x="739.38" y="371" width="1.1" height="2.6" fill="#c8c8c8"/>
<text x="62.75" y="381.90" font-family="Liberation Sans, sans-serif" font-size="10.5" fill="#dedede" stroke="#dedede" stroke-width="0.3" textLength="15.35" lengthAdjust="spacingAndGlyphs">Jun</text>
<text x="151.25" y="381.90" font-family="Liberation Sans, sans-serif" font-size="10.5" fill="#dedede" stroke="#dedede" stroke-width="0.3" textLength="16.25" lengthAdjust="spacingAndGlyphs">Sep</text>
<text x="239.50" y="381.90" font-family="Liberation Sans, sans-serif" font-size="10.5" fill="#dedede" stroke="#dedede" stroke-width="0.3" textLength="16.75" lengthAdjust="spacingAndGlyphs">Dec</text>
<text x="329.50" y="381.90" font-family="Liberation Sans, sans-serif" font-size="10.5" fill="#dedede" stroke="#dedede" stroke-width="0.3" textLength="15.50" lengthAdjust="spacingAndGlyphs">Mar</text>
<text x="417.50" y="381.90" font-family="Liberation Sans, sans-serif" font-size="10.5" fill="#dedede" stroke="#dedede" stroke-width="0.3" textLength="16.25" lengthAdjust="spacingAndGlyphs">Jun</text>
<text x="506.50" y="381.90" font-family="Liberation Sans, sans-serif" font-size="10.5" fill="#dedede" stroke="#dedede" stroke-width="0.3" textLength="16.00" lengthAdjust="spacingAndGlyphs">Sep</text>
<text x="598.00" y="381.90" font-family="Liberation Sans, sans-serif" font-size="10.5" fill="#dedede" stroke="#dedede" stroke-width="0.3" textLength="17.00" lengthAdjust="spacingAndGlyphs">Dec</text>
<text x="683.75" y="381.90" font-family="Liberation Sans, sans-serif" font-size="10.5" fill="#dedede" stroke="#dedede" stroke-width="0.3" textLength="16.25" lengthAdjust="spacingAndGlyphs">Mar</text>
<text x="138.75" y="394.00" font-family="Liberation Sans, sans-serif" font-size="10.5" fill="#dedede" stroke="#dedede" stroke-width="0.3" textLength="21.25" lengthAdjust="spacingAndGlyphs">2020</text>
<text x="431.75" y="394.00" font-family="Liberation Sans, sans-serif" font-size="10.5" fill="#dedede" stroke="#dedede" stroke-width="0.3" textLength="20.75" lengthAdjust="spacingAndGlyphs">2021</text>
<text x="684.50" y="394.00" font-family="Liberation Sans, sans-serif" font-size="10.5" fill="#dedede" stroke="#dedede" stroke-width="0.3" textLength="21.00" lengthAdjust="spacingAndGlyphs">2022</text>
<rect x="261.70" y="383.3" width="1" height="12.5" fill="#7a7a7a"/>
<rect x="623.80" y="383.3" width="1" height="12.5" fill="#7a7a7a"/>
<polyline points="36.25,353.30 55.00,353.90 70.00,353.30 76.25,346.90 86.00,345.60 105.00,345.50 120.00,345.20 129.00,344.20 154.50,344.20 159.70,345.20 166.50,339.20 180.00,338.50 189.00,336.20 201.00,333.70 207.00,333.20 222.00,335.80 234.00,336.70 241.00,335.70 248.50,338.20 254.50,341.20 272.50,340.80 287.50,342.30 298.00,340.80 307.00,340.50 319.00,342.70 328.00,344.20 337.00,344.70 343.00,342.70 349.00,341.70 355.00,341.80 370.00,343.30 382.00,342.70 391.00,340.30 403.00,339.70 412.00,339.20 424.00,339.70 431.50,340.30 439.00,341.80 445.70,338.80 452.50,341.20 460.00,340.30 470.00,338.70 481.20,337.20 492.40,338.70 500.80,337.50 514.80,334.40 521.30,323.70 533.40,329.30 541.80,327.80 548.40,326.00 555.80,326.90 563.30,324.50 569.80,318.50 582.00,316.30 594.00,318.90 602.90,317.60 609.60,289.80 623.00,288.50 629.70,290.70 636.50,284.70 644.30,276.40 651.00,275.00 658.80,266.80 667.80,260.10 677.50,250.00 684.90,233.50 691.60,226.30 696.90,238.30 705.80,261.60 711.80,256.00 719.30,246.50 726.00,235.30 732.70,212.20 739.40,207.20 746.10,207.20" fill="none" stroke="#76c800" stroke-width="1.7" stroke-linejoin="round"/>
<polyline points="36.25,349.40 73.75,346.50 86.00,345.60 92.50,346.50 105.00,345.00 126.00,344.80 138.70,340.00 146.20,341.20 152.20,340.30 159.00,340.00 165.00,351.70 177.00,351.20 189.00,350.50 201.00,348.70 213.00,344.20 219.00,344.80 228.00,340.70 241.00,339.30 247.00,341.20 254.50,342.30 265.00,340.80 275.50,340.20 287.50,340.20 296.50,340.50 302.50,338.70 313.00,339.30 325.00,339.70 337.00,340.50 343.70,346.50 350.40,343.50 355.00,343.30 364.00,342.70 371.50,343.30 391.00,340.00 400.00,340.70 410.50,341.50 418.00,340.70 425.50,341.80 432.20,327.20 439.00,329.50 446.50,327.20 457.00,326.20 466.70,325.70 472.00,325.30 480.30,327.50 492.40,327.50 500.80,329.30 507.30,329.30 521.30,320.70 533.40,323.20 541.80,325.60 548.40,320.70 555.80,316.60 563.30,309.20 574.50,298.90 582.90,293.90 590.00,292.00 596.20,290.30 609.60,294.30 617.40,289.80 629.70,287.60 637.60,283.60 644.30,276.40 651.00,270.60 664.40,273.50 670.00,272.10 679.00,255.70 685.70,257.80 692.40,256.70 699.10,279.90 705.80,275.10 711.80,276.10 719.30,272.70 726.00,273.60 732.70,258.20 739.40,260.40 746.10,257.50" fill="none" stroke="#c86cf8" stroke-width="1.7" stroke-linejoin="round"/>
<polyline points="36.25,352.25 70.00,352.25 77.50,353.50 87.50,353.50 111.00,352.50 120.00,352.00 157.50,351.20 165.00,344.80 180.00,343.30 192.00,341.80 204.00,342.20 216.00,342.70 222.00,344.20 235.00,342.30 248.50,342.00 254.50,335.70 262.00,333.70 268.70,333.00 275.50,335.70 286.00,336.70 296.50,337.80 302.50,342.70 310.00,344.20 319.00,342.70 328.00,343.50 337.00,343.80 343.00,346.20 355.00,346.60 377.50,346.70 385.00,345.70 397.00,347.20 407.50,347.50 418.00,348.20 425.50,347.20 432.20,337.30 439.00,337.70 446.50,338.20 453.20,336.20 460.00,337.00 470.00,338.10 492.40,338.70 507.30,337.50 514.80,335.70 521.30,330.10 529.70,331.20 541.80,331.90 555.80,334.40 570.70,335.70 585.00,335.50 602.90,333.90 609.60,317.60 623.00,317.60 630.90,308.20 637.60,310.90 651.00,307.00 657.70,299.70 670.00,302.20 677.50,300.00 692.40,294.50 699.10,225.60 705.80,218.90 712.50,217.10 719.30,219.60 726.00,225.10 732.70,224.10 739.40,221.10 746.10,221.90" fill="none" stroke="#ffe900" stroke-width="1.7" stroke-linejoin="round"/>
<polyline points="36.25,345.90 61.00,345.90 70.00,346.90 76.25,351.90 90.00,352.20 111.00,350.50 132.00,351.70 157.50,351.20 165.00,350.20 174.00,350.20 186.00,347.80 198.00,349.30 207.00,347.50 219.00,345.20 228.00,342.20 240.00,341.80 244.00,342.00 254.50,344.20 262.00,344.70 268.70,342.30 278.50,343.50 287.50,344.20 298.00,345.70 307.00,346.50 325.00,346.50 332.50,345.70 337.00,346.50 343.00,331.80 349.00,331.20 355.00,331.30 364.00,330.70 371.50,331.70 377.50,330.20 385.00,329.50 397.00,330.20 404.50,332.80 412.00,330.20 418.00,331.30 425.50,329.20 432.20,323.20 439.00,325.70 446.50,325.00 453.20,323.20 460.00,324.20 466.70,323.20 472.00,324.10 479.30,322.60 486.80,323.70 493.30,326.30 500.80,324.10 507.30,322.60 514.80,321.90 521.30,336.80 529.70,335.30 541.80,334.90 548.40,326.00 555.80,319.40 563.30,314.40 569.80,312.00 576.30,311.00 582.90,308.80 589.50,310.00 596.20,299.70 601.80,299.70 609.60,321.10 623.00,317.10 629.70,320.50 637.60,312.20 644.30,301.50 658.80,298.10 664.40,297.00 670.00,297.50 677.50,300.40 684.90,294.80 691.60,287.30 696.10,254.70 698.40,221.10 705.80,215.10 712.50,205.40 719.30,204.70 726.00,206.20 732.70,206.90 739.40,201.70 746.10,204.00" fill="none" stroke="#ff6400" stroke-width="1.7" stroke-linejoin="round"/>
<rect x="37.5" y="189.8" width="266" height="59.5" rx="2" fill="#0f0f0f"/>
<rect x="43.1" y="197.10" width="9.6" height="8.9" fill="#ffe900"/>
<text x="56.20" y="205.90" font-family="Liberation Sans, sans-serif" font-size="10.5" fill="#dedede" stroke="#dedede" stroke-width="0.3" textLength="33.40" lengthAdjust="spacingAndGlyphs">Generic</text>
<text x="93.80" y="205.90" font-family="Liberation Sans, sans-serif" font-size="10.5" fill="#dedede" stroke="#dedede" stroke-width="0.3" textLength="14.60" lengthAdjust="spacingAndGlyphs">1st</text>
<text x="112.20" y="205.90" font-family="Liberation Sans, sans-serif" font-size="10.5" fill="#dedede" stroke="#dedede" stroke-width="0.3" textLength="34.50" lengthAdjust="spacingAndGlyphs">Futures</text>
<text x="150.30" y="205.90" font-family="Liberation Sans, sans-serif" font-size="10.5" fill="#dedede" stroke="#dedede" stroke-width="0.3" textLength="22.60" lengthAdjust="spacingAndGlyphs">Open</text>
<text x="176.80" y="205.90" font-family="Liberation Sans, sans-serif" font-size="10.5" fill="#dedede" stroke="#dedede" stroke-width="0.3" textLength="40.60" lengthAdjust="spacingAndGlyphs">Interest:</text>
<text x="221.60" y="205.90" font-family="Liberation Sans, sans-serif" font-size="10.5" fill="#dedede" stroke="#dedede" stroke-width="0.3" textLength="23.00" lengthAdjust="spacingAndGlyphs">SOFR</text>
<text x="248.70" y="205.90" font-family="Liberation Sans, sans-serif" font-size="10.5" fill="#dedede" stroke="#dedede" stroke-width="0.3" textLength="10.50" lengthAdjust="spacingAndGlyphs">as</text>
<text x="262.70" y="205.90" font-family="Liberation Sans, sans-serif" font-size="10.5" fill="#dedede" stroke="#dedede" stroke-width="0.3" textLength="6.10" lengthAdjust="spacingAndGlyphs">%</text>
<text x="272.30" y="205.90" font-family="Liberation Sans, sans-serif" font-size="10.5" fill="#dedede" stroke="#dedede" stroke-width="0.3" textLength="8.68" lengthAdjust="spacingAndGlyphs">of</text>
<text x="285.30" y="205.90" font-family="Liberation Sans, sans-serif" font-size="10.5" fill="#dedede" stroke="#dedede" stroke-width="0.3" textLength="11.40" lengthAdjust="spacingAndGlyphs">ED</text>
<rect x="43.1" y="209.30" width="9.6" height="8.9" fill="#76c800"/>
<text x="56.20" y="218.10" font-family="Liberation Sans, sans-serif" font-size="10.5" fill="#dedede" stroke="#dedede" stroke-width="0.3" textLength="33.40" lengthAdjust="spacingAndGlyphs">Generic</text>
<text x="93.80" y="218.10" font-family="Liberation Sans, sans-serif" font-size="10.5" fill="#dedede" stroke="#dedede" stroke-width="0.3" textLength="16.00" lengthAdjust="spacingAndGlyphs">2nd</text>
<text x="113.60" y="218.10" font-family="Liberation Sans, sans-serif" font-size="10.5" fill="#dedede" stroke="#dedede" stroke-width="0.3" textLength="34.50" lengthAdjust="spacingAndGlyphs">Futures</text>
<text x="151.70" y="218.10" font-family="Liberation Sans, sans-serif" font-size="10.5" fill="#dedede" stroke="#dedede" stroke-width="0.3" textLength="22.60" lengthAdjust="spacingAndGlyphs">Open</text>
<text x="178.20" y="218.10" font-family="Liberation Sans, sans-serif" font-size="10.5" fill="#dedede" stroke="#dedede" stroke-width="0.3" textLength="40.60" lengthAdjust="spacingAndGlyphs">Interest:</text>
<text x="223.00" y="218.10" font-family="Liberation Sans, sans-serif" font-size="10.5" fill="#dedede" stroke="#dedede" stroke-width="0.3" textLength="23.00" lengthAdjust="spacingAndGlyphs">SOFR</text>
<text x="250.10" y="218.10" font-family="Liberation Sans, sans-serif" font-size="10.5" fill="#dedede" stroke="#dedede" stroke-width="0.3" textLength="10.50" lengthAdjust="spacingAndGlyphs">as</text>
<text x="264.10" y="218.10" font-family="Liberation Sans, sans-serif" font-size="10.5" fill="#dedede" stroke="#dedede" stroke-width="0.3" textLength="6.10" lengthAdjust="spacingAndGlyphs">%</text>
<text x="273.70" y="218.10" font-family="Liberation Sans, sans-serif" font-size="10.5" fill="#dedede" stroke="#dedede" stroke-width="0.3" textLength="8.68" lengthAdjust="spacingAndGlyphs">of</text>
<text x="286.70" y="218.10" font-family="Liberation Sans, sans-serif" font-size="10.5" fill="#dedede" stroke="#dedede" stroke-width="0.3" textLength="11.40" lengthAdjust="spacingAndGlyphs">ED</text>
<rect x="43.1" y="221.50" width="9.6" height="8.9" fill="#c86cf8"/>
<text x="56.20" y="230.30" font-family="Liberation Sans, sans-serif" font-size="10.5" fill="#dedede" stroke="#dedede" stroke-width="0.3" textLength="33.40" lengthAdjust="spacingAndGlyphs">Generic</text>
<text x="93.80" y="230.30" font-family="Liberation Sans, sans-serif" font-size="10.5" fill="#dedede" stroke="#dedede" stroke-width="0.3" textLength="14.60" lengthAdjust="spacingAndGlyphs">3rd</text>
<text x="112.20" y="230.30" font-family="Liberation Sans, sans-serif" font-size="10.5" fill="#dedede" stroke="#dedede" stroke-width="0.3" textLength="34.50" lengthAdjust="spacingAndGlyphs">Futures</text>
<text x="150.30" y="230.30" font-family="Liberation Sans, sans-serif" font-size="10.5" fill="#dedede" stroke="#dedede" stroke-width="0.3" textLength="22.60" lengthAdjust="spacingAndGlyphs">Open</text>
<text x="176.80" y="230.30" font-family="Liberation Sans, sans-serif" font-size="10.5" fill="#dedede" stroke="#dedede" stroke-width="0.3" textLength="40.60" lengthAdjust="spacingAndGlyphs">Interest:</text>
<text x="221.60" y="230.30" font-family="Liberation Sans, sans-serif" font-size="10.5" fill="#dedede" stroke="#dedede" stroke-width="0.3" textLength="23.00" lengthAdjust="spacingAndGlyphs">SOFR</text>
<text x="248.70" y="230.30" font-family="Liberation Sans, sans-serif" font-size="10.5" fill="#dedede" stroke="#dedede" stroke-width="0.3" textLength="10.50" lengthAdjust="spacingAndGlyphs">as</text>
<text x="262.70" y="230.30" font-family="Liberation Sans, sans-serif" font-size="10.5" fill="#dedede" stroke="#dedede" stroke-width="0.3" textLength="6.10" lengthAdjust="spacingAndGlyphs">%</text>
<text x="272.30" y="230.30" font-family="Liberation Sans, sans-serif" font-size="10.5" fill="#dedede" stroke="#dedede" stroke-width="0.3" textLength="8.68" lengthAdjust="spacingAndGlyphs">of</text>
<text x="285.30" y="230.30" font-family="Liberation Sans, sans-serif" font-size="10.5" fill="#dedede" stroke="#dedede" stroke-width="0.3" textLength="11.40" lengthAdjust="spacingAndGlyphs">ED</text>
<rect x="43.1" y="233.70" width="9.6" height="8.9" fill="#ff6400"/>
<text x="56.20" y="242.50" font-family="Liberation Sans, sans-serif" font-size="10.5" fill="#dedede" stroke="#dedede" stroke-width="0.3" textLength="33.40" lengthAdjust="spacingAndGlyphs">Generic</text>
<text x="93.80" y="242.50" font-family="Liberation Sans, sans-serif" font-size="10.5" fill="#dedede" stroke="#dedede" stroke-width="0.3" textLength="14.60" lengthAdjust="spacingAndGlyphs">4th</text>
<text x="112.20" y="242.50" font-family="Liberation Sans, sans-serif" font-size="10.5" fill="#dedede" stroke="#dedede" stroke-width="0.3" textLength="34.50" lengthAdjust="spacingAndGlyphs">Futures</text>
<text x="150.30" y="242.50" font-family="Liberation Sans, sans-serif" font-size="10.5" fill="#dedede" stroke="#dedede" stroke-width="0.3" textLength="22.60" lengthAdjust="spacingAndGlyphs">Open</text>
<text x="176.80" y="242.50" font-family="Liberation Sans, sans-serif" font-size="10.5" fill="#dedede" stroke="#dedede" stroke-width="0.3" textLength="40.60" lengthAdjust="spacingAndGlyphs">Interest:</text>
<text x="221.60" y="242.50" font-family="Liberation Sans, sans-serif" font-size="10.5" fill="#dedede" stroke="#dedede" stroke-width="0.3" textLength="23.00" lengthAdjust="spacingAndGlyphs">SOFR</text>
<text x="248.70" y="242.50" font-family="Liberation Sans, sans-serif" font-size="10.5" fill="#dedede" stroke="#dedede" stroke-width="0.3" textLength="10.50" lengthAdjust="spacingAndGlyphs">as</text>
<text x="262.70" y="242.50" font-family="Liberation Sans, sans-serif" font-size="10.5" fill="#dedede" stroke="#dedede" stroke-width="0.3" textLength="6.10" lengthAdjust="spacingAndGlyphs">%</text>
<text x="272.30" y="242.50" font-family="Liberation Sans, sans-serif" font-size="10.5" fill="#dedede" stroke="#dedede" stroke-width="0.3" textLength="8.68" lengthAdjust="spacingAndGlyphs">of</text>
<text x="285.30" y="242.50" font-family="Liberation Sans, sans-serif" font-size="10.5" fill="#dedede" stroke="#dedede" stroke-width="0.3" textLength="11.40" lengthAdjust="spacingAndGlyphs">ED</text>
<rect x="743" y="353.4" width="20.9" height="10.1" fill="#151515"/>
<rect x="750.6" y="355.3" width="6.6" height="6.9" fill="none" stroke="#6e6e6e" stroke-width="1"/>
<polyline points="751.8,358.7 753,357.6 754.3,359.4 756,357.6" fill="none" stroke="#bdbdbd" stroke-width="1"/>
<polygon points="759.9,357.7 762.8,357.7 761.35,359.3" fill="#b0b0b0"/>
</svg></body></html>
